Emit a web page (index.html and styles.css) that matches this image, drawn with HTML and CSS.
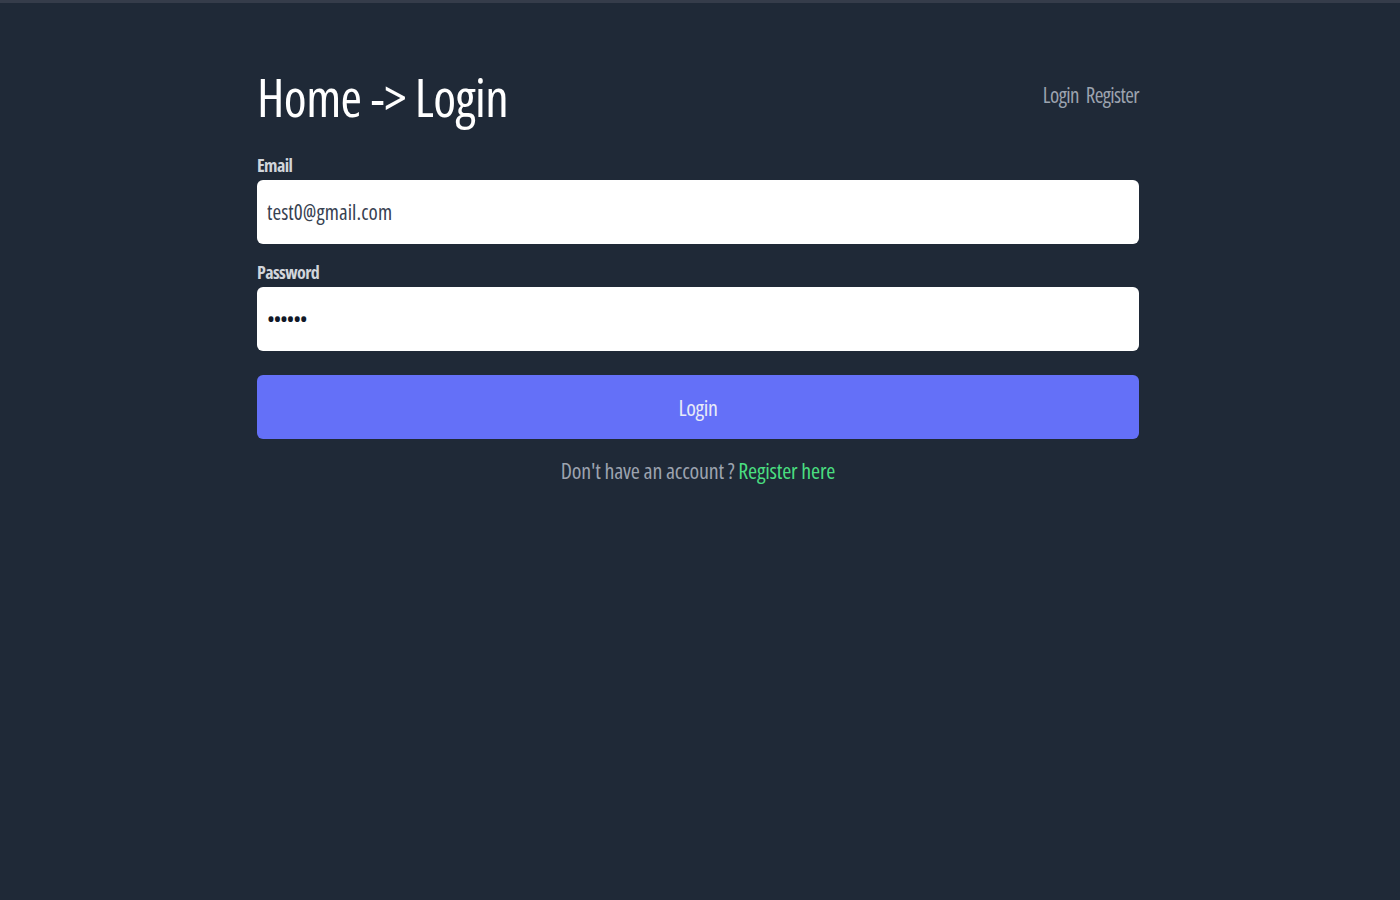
FILE: index.html
```html
<!DOCTYPE html>
<html lang="en">
<head>
<meta charset="utf-8">
<title>Login</title>
<link rel="stylesheet" href="styles.css">
</head>
<body>
<div class="page">
  <header class="header">
    <h1 class="title">Home -&gt; Login</h1>
    <nav class="nav">
      <a class="nav-link" href="#">Login</a>
      <a class="nav-link" href="#">Register</a>
    </nav>
  </header>
  <form class="form">
    <div class="field">
      <label class="label" for="email">Email</label>
      <input class="input" id="email" type="email" value="test0@gmail.com">
    </div>
    <div class="field">
      <label class="label" for="password">Password</label>
      <input class="input input-password" id="password" type="password" value="123456">
    </div>
    <button class="btn" type="button">Login</button>
  </form>
  <p class="footer">Don't have an account ? <a class="footer-link" href="#">Register here</a></p>
</div>
</body>
</html>
```
FILE: styles.css
```css
html, body {
  margin: 0;
  padding: 0;
}
body {
  background: #1f2937;
  border-top: 3px solid #353c4a;
  min-height: 897px;
  font-family: "Open Sans", sans-serif;
  font-stretch: 75%;
  padding-right: 4px;
}
.page {
  width: 882px;
  margin: 0 auto;
  padding-top: 63px;
}
.header {
  display: flex;
  justify-content: space-between;
  align-items: flex-start;
}
.title {
  margin: 0;
  font-size: 52px;
  line-height: 62px;
  font-weight: 400;
  letter-spacing: -0.6px;
  color: #ffffff;
}
.nav {
  display: flex;
  gap: 7px;
  margin-top: 14px;
}
.nav-link {
  font-size: 21px;
  line-height: 30px;
  color: #9ca3af;
  text-decoration: none;
  letter-spacing: -0.6px;
}
.form {
  display: flex;
  flex-direction: column;
  gap: 17px;
  margin-top: 26px;
}
.field {
  display: flex;
  flex-direction: column;
}
.label {
  font-size: 18px;
  line-height: 23px;
  font-weight: 700;
  color: #d1d5db;
  margin-bottom: 3px;
  letter-spacing: -0.6px;
}
.input {
  height: 64px;
  box-sizing: border-box;
  border: none;
  border-radius: 6px;
  background: #ffffff;
  padding: 0 10px;
  font-family: "Open Sans", sans-serif;
  font-stretch: 75%;
  font-size: 21px;
  color: #374151;
  outline: none;
  letter-spacing: 0.1px;
}
.input-password {
  color: #111827;
  letter-spacing: -1.4px;
}
.btn {
  margin-top: 7px;
  height: 64px;
  border: none;
  border-radius: 6px;
  background: #6470f8;
  color: #e8ebf7;
  font-family: "Open Sans", sans-serif;
  font-stretch: 75%;
  font-size: 22px;
  letter-spacing: -0.3px;
  cursor: pointer;
}
.footer {
  margin: 16px 0 0;
  text-align: center;
  font-size: 22px;
  line-height: 30px;
  color: #9ca3af;
  letter-spacing: -0.2px;
}
.footer-link {
  color: #4ade80;
  text-decoration: none;
}
```
